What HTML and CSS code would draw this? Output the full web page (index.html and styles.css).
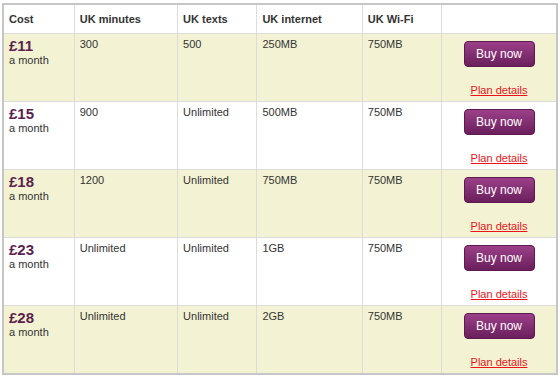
FILE: index.html
```html
<!DOCTYPE html>
<html lang="en">
<head>
    <meta charset="UTF-8">
    <title>Plans</title>
    <link rel="stylesheet" href="styles.css">
</head>
<body>
    <div class="wrap">
        <table class="plans">
            <colgroup>
                <col class="c-cost">
                <col class="c-min">
                <col class="c-txt">
                <col class="c-net">
                <col class="c-wifi">
                <col class="c-buy">
            </colgroup>
            <thead>
                <tr>
                    <th>Cost</th>
                    <th>UK minutes</th>
                    <th>UK texts</th>
                    <th>UK internet</th>
                    <th>UK Wi-Fi</th>
                    <th></th>
                </tr>
            </thead>
            <tbody>
                <tr class="alt">
                    <td><span class="price">£11</span><br>a month</td>
                    <td>300</td>
                    <td>500</td>
                    <td>250MB</td>
                    <td>750MB</td>
                    <td class="buy"><button class="buy-button">Buy now</button><a href="#" class="details">Plan details</a></td>
                </tr>
                <tr>
                    <td><span class="price">£15</span><br>a month</td>
                    <td>900</td>
                    <td>Unlimited</td>
                    <td>500MB</td>
                    <td>750MB</td>
                    <td class="buy"><button class="buy-button">Buy now</button><a href="#" class="details">Plan details</a></td>
                </tr>
                <tr class="alt">
                    <td><span class="price">£18</span><br>a month</td>
                    <td>1200</td>
                    <td>Unlimited</td>
                    <td>750MB</td>
                    <td>750MB</td>
                    <td class="buy"><button class="buy-button">Buy now</button><a href="#" class="details">Plan details</a></td>
                </tr>
                <tr>
                    <td><span class="price">£23</span><br>a month</td>
                    <td>Unlimited</td>
                    <td>Unlimited</td>
                    <td>1GB</td>
                    <td>750MB</td>
                    <td class="buy"><button class="buy-button">Buy now</button><a href="#" class="details">Plan details</a></td>
                </tr>
                <tr class="alt">
                    <td><span class="price">£28</span><br>a month</td>
                    <td>Unlimited</td>
                    <td>Unlimited</td>
                    <td>2GB</td>
                    <td>750MB</td>
                    <td class="buy"><button class="buy-button">Buy now</button><a href="#" class="details">Plan details</a></td>
                </tr>
            </tbody>
        </table>
    </div>
</body>
</html>
```

FILE: styles.css
```css
body {
    margin: 0;
    padding: 0;
    background-color: #fff;
    font-family: Arial, "Liberation Sans", sans-serif;
    font-size: 11px;
    color: #333;
}
.wrap {
    padding: 3px 2px 2px 2px;
}
.plans {
    width: 556px;
    table-layout: fixed;
    border-collapse: collapse;
    border: 2px solid #c6c6c6;
}
.c-cost { width: 71px; }
.c-min { width: 103px; }
.c-txt { width: 79px; }
.c-net { width: 105px; }
.c-wifi { width: 79px; }
.c-buy { width: 115px; }
th {
    height: 28px;
    padding: 0 5px;
    text-align: left;
    font-weight: bold;
    color: #333;
    background-color: #fff;
    border: 1px solid #dcdcdc;
    border-top: none;
}
td {
    height: 59px;
    padding: 4px 5px;
    vertical-align: top;
    line-height: 13px;
    border: 1px solid #dcdcdc;
}
tr.alt td {
    background-color: #f3f3d4;
}
.price {
    display: inline-block;
    font-size: 15px;
    font-weight: bold;
    line-height: 16px;
    color: #5c1f4e;
}
.buy {
    text-align: center;
}
.buy-button {
    display: block;
    width: 71px;
    height: 26px;
    margin: 3px auto 0 auto;
    padding: 0;
    font-family: Arial, "Liberation Sans", sans-serif;
    font-size: 12px;
    color: #fff;
    background: linear-gradient(#9c4089, #6a1f5c);
    border: 1px solid #5e1a50;
    border-radius: 4px;
    cursor: pointer;
}
.details {
    display: block;
    margin-top: 17px;
    line-height: 13px;
    color: #e8141a;
    text-decoration: underline;
}
```
